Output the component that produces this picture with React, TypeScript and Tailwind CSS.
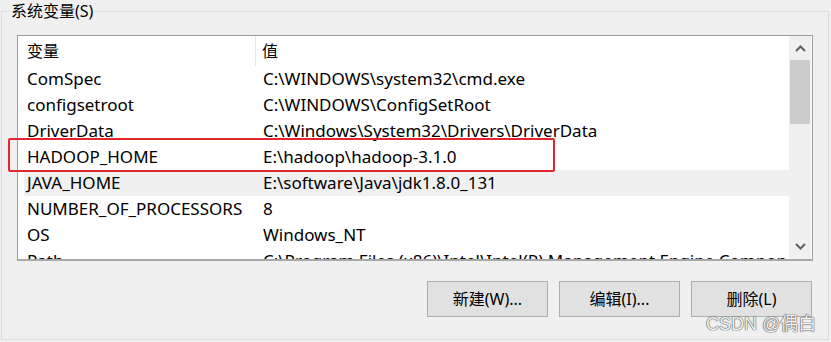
import React from "react";

const rows: [string, string][] = [
  ["ComSpec", "C:\\WINDOWS\\system32\\cmd.exe"],
  ["configsetroot", "C:\\WINDOWS\\ConfigSetRoot"],
  ["DriverData", "C:\\Windows\\System32\\Drivers\\DriverData"],
  ["HADOOP_HOME", "E:\\hadoop\\hadoop-3.1.0"],
  ["JAVA_HOME", "E:\\software\\Java\\jdk1.8.0_131"],
  ["NUMBER_OF_PROCESSORS", "8"],
  ["OS", "Windows_NT"],
  ["Path", "C:\\Program Files (x86)\\Intel\\Intel(R) Management Engine Components\\iCLS\\"],
];

function Btn({ label }: { label: string }) {
  return (
    <div className="w-[121px] h-[36px] bg-[#e1e1e1] border border-[#adadad] flex items-center justify-center text-[16px] text-black">
      {label}
    </div>
  );
}

export default function App() {
  return (
    <div
      className="relative w-[831px] h-[342px] bg-[#f0f0f0] overflow-hidden text-black"
      style={{ fontFamily: '"Noto Sans", "Noto Sans CJK SC", sans-serif' }}
    >
      <div className="pt-[11px] pl-[1px]">
        <div className="relative w-[828px] h-[329px] border border-[#dcdcdc] pl-[15px] pt-[23px]">
          <div className="absolute left-[7px] top-[-12px] px-[2px] bg-[#f0f0f0] text-[16px] leading-[22px]">
            系统变量(S)
          </div>
          <div className="w-[796px] h-[226px] bg-white border border-[#9c9c9c] border-b-2 border-b-[#a8a8a8] flex overflow-hidden">
            <div className="flex-1 min-w-0 flex flex-col overflow-hidden">
              <div className="h-[30px] flex items-center shrink-0 text-[16px]">
                <div className="w-[238px] shrink-0 pl-[9px] h-full flex items-center border-r border-[#e5e5e5]">变量</div>
                <div className="pl-[6px]">值</div>
              </div>
              {rows.map(([k, v], i) => (
                <div
                  key={k}
                  className={
                    "ml-[6px] h-[26px] shrink-0 flex items-center text-[17px] whitespace-nowrap " +
                    (i === 4 ? "bg-[#f0f0f0]" : "")
                  }
                >
                  <div className="w-[232px] shrink-0 pl-[3px]">{k}</div>
                  <div className="pl-[7px] shrink-0">{v}</div>
                </div>
              ))}
            </div>
            <div className="w-[22px] mr-[1px] bg-[#f0f0f0] flex flex-col items-center shrink-0">
              <div className="h-[24px] flex items-center justify-center">
                <svg width="11" height="7" viewBox="0 0 11 7">
                  <path d="M1 6 L5.5 1.5 L10 6" fill="none" stroke="#606060" strokeWidth="2" />
                </svg>
              </div>
              <div className="w-[20px] h-[64px] bg-[#cdcdcd]" />
              <div className="flex-1" />
              <div className="h-[24px] flex items-center justify-center mb-[1px]">
                <svg width="11" height="7" viewBox="0 0 11 7">
                  <path d="M1 1 L5.5 5.5 L10 1" fill="none" stroke="#606060" strokeWidth="2" />
                </svg>
              </div>
            </div>
          </div>
          <div className="mt-[20px] w-[796px] flex justify-end gap-[11px] pr-[1px]">
            <Btn label="新建(W)..." />
            <Btn label="编辑(I)..." />
            <Btn label="删除(L)" />
          </div>
        </div>
      </div>
      <div className="absolute left-[8px] top-[138px] w-[547px] h-[34px] border-2 border-[#e3252e] rounded-[2px]" />
      <div
        className="absolute left-[706px] top-[312px] text-[18px] leading-[24px] text-[#f4f4f4] [text-shadow:0_0_1px_#555,0_0_1px_#555,0_0_1px_#555]"
        style={{ fontFamily: '"Liberation Sans", "Noto Sans CJK SC", sans-serif' }}
      >
        CSDN @偶白
      </div>
    </div>
  );
}
